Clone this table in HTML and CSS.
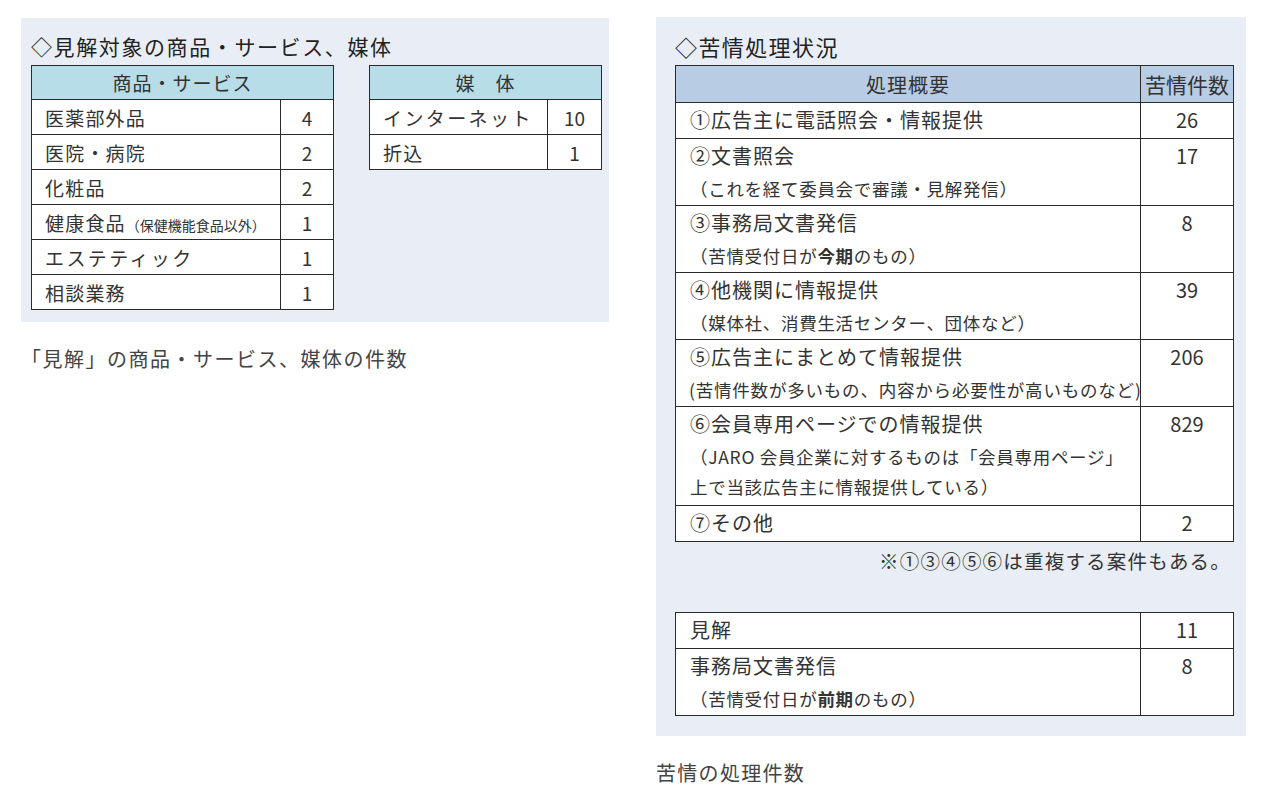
FILE: index.html
```html
<!DOCTYPE html>
<html lang="ja">
<head>
<meta charset="utf-8">
<title>見解・苦情処理</title>
<link rel="stylesheet" href="styles.css">
</head>
<body>
<div class="page">
  <figure class="fig fig-left">
    <div class="panel panel-left">
      <div class="title">◇見解対象の商品・サービス、媒体</div>
      <div class="tables">
        <table class="tbl tbl-goods">
          <colgroup><col class="c-name1"><col class="c-num1"></colgroup>
          <thead><tr><th colspan="2" class="th-teal">商品・サービス</th></tr></thead>
          <tbody>
            <tr><td>医薬部外品</td><td class="num">4</td></tr>
            <tr><td>医院・病院</td><td class="num">2</td></tr>
            <tr><td>化粧品</td><td class="num">2</td></tr>
            <tr><td>健康食品<span class="small">（保健機能食品以外）</span></td><td class="num">1</td></tr>
            <tr><td class="spaced">エステティック</td><td class="num">1</td></tr>
            <tr><td>相談業務</td><td class="num">1</td></tr>
          </tbody>
        </table>
        <table class="tbl tbl-media">
          <colgroup><col class="c-name2"><col class="c-num2"></colgroup>
          <thead><tr><th colspan="2" class="th-teal">媒　体</th></tr></thead>
          <tbody>
            <tr><td class="spaced">インターネット</td><td class="num">10</td></tr>
            <tr><td>折込</td><td class="num">1</td></tr>
          </tbody>
        </table>
      </div>
    </div>
    <figcaption class="caption">「見解」の商品・サービス、媒体の件数</figcaption>
  </figure>

  <figure class="fig fig-right">
    <div class="panel panel-right">
      <div class="title title-right">◇苦情処理状況</div>
      <table class="tbl tbl-status">
        <colgroup><col class="c-desc"><col class="c-count"></colgroup>
        <thead><tr><th class="th-blue">処理概要</th><th class="th-blue th-count">苦情件数</th></tr></thead>
        <tbody>
          <tr><td><div class="main">①広告主に電話照会・情報提供</div></td><td class="cnt">26</td></tr>
          <tr><td><div class="main">②文書照会</div><div class="sub">（これを経て委員会で審議・見解発信）</div></td><td class="cnt">17</td></tr>
          <tr><td><div class="main">③事務局文書発信</div><div class="sub">（苦情受付日が<b>今期</b>のもの）</div></td><td class="cnt">8</td></tr>
          <tr><td><div class="main">④他機関に情報提供</div><div class="sub">（媒体社、消費生活センター、団体など）</div></td><td class="cnt">39</td></tr>
          <tr><td><div class="main">⑤広告主にまとめて情報提供</div><div class="sub tight">(苦情件数が多いもの、内容から必要性が高いものなど)</div></td><td class="cnt">206</td></tr>
          <tr><td><div class="main">⑥会員専用ページでの情報提供</div><div class="sub">（JARO 会員企業に対するものは「会員専用ページ」</div><div class="sub last">上で当該広告主に情報提供している）</div></td><td class="cnt">829</td></tr>
          <tr><td><div class="main">⑦その他</div></td><td class="cnt">2</td></tr>
        </tbody>
      </table>
      <div class="note">※①③④⑤⑥は重複する案件もある。</div>
      <table class="tbl tbl-status tbl-extra">
        <colgroup><col class="c-desc"><col class="c-count"></colgroup>
        <tbody>
          <tr><td><div class="main">見解</div></td><td class="cnt">11</td></tr>
          <tr><td><div class="main">事務局文書発信</div><div class="sub">（苦情受付日が<b>前期</b>のもの）</div></td><td class="cnt">8</td></tr>
        </tbody>
      </table>
    </div>
    <figcaption class="caption">苦情の処理件数</figcaption>
  </figure>
</div>
</body>
</html>
```

FILE: styles.css
```css
* { box-sizing: border-box; }

html, body {
  margin: 0;
  padding: 0;
  background: #ffffff;
}

body {
  font-family: "Noto Sans CJK JP", "Noto Sans", sans-serif;
  color: #222;
}

.page {
  display: flex;
  align-items: flex-start;
  gap: 47px;
  padding: 17px 0 0 21px;
}

.fig {
  margin: 0;
}

.panel {
  background: #e9eef6;
}

.panel-left {
  width: 588px;
  margin-top: 1px;
  padding: 9px 10px 12px 10px;
}

.panel-right {
  width: 590px;
  padding: 10px 13px 20px 19px;
}

.title {
  font-size: 21px;
  line-height: 38px;
  letter-spacing: 1.6px;
  color: #222;
  white-space: nowrap;
}

.title-right {
  font-size: 22px;
  letter-spacing: 1.4px;
}

.tables {
  display: flex;
  align-items: flex-start;
  gap: 35px;
}

.tbl {
  border-collapse: collapse;
  background: #fff;
  table-layout: fixed;
}

.tbl th,
.tbl td {
  border: 1px solid #2a2a2a;
  padding: 0;
}

.th-teal {
  background: #b7dde8;
  font-weight: normal;
  font-size: 19px;
  letter-spacing: 1px;
  height: 34px;
  text-align: center;
  color: #333;
}

.th-blue {
  background: #b8cce4;
  font-weight: normal;
  font-size: 20px;
  letter-spacing: 1px;
  height: 37px;
  text-align: center;
  color: #333;
}

.th-count {
  letter-spacing: 0;
  font-size: 21px;
}

.tbl-goods { width: 302px; }
.c-name1 { width: 249px; }
.c-num1 { width: 53px; }

.tbl-media { width: 232px; }
.c-name2 { width: 178px; }
.c-num2 { width: 54px; }

.tbl-goods td,
.tbl-media td {
  height: 35px;
  font-size: 19px;
  letter-spacing: 1.2px;
  padding-left: 13px;
  white-space: nowrap;
  color: #333;
}

.tbl-goods td.spaced,
.tbl-media td.spaced {
  letter-spacing: 2.4px;
}

.tbl td.num {
  padding: 0;
  text-align: center;
  font-size: 19px;
  letter-spacing: 0;
}

.small {
  font-size: 14px;
  letter-spacing: 0;
}

.tbl-status { width: 558px; }
.c-desc { width: 465px; }
.c-count { width: 93px; }

.tbl-status td {
  vertical-align: top;
  padding: 0 0 1px 14px;
  color: #333;
}

.main {
  font-size: 20px;
  line-height: 34px;
  letter-spacing: 1px;
  white-space: nowrap;
}

.sub {
  font-size: 17.5px;
  line-height: 31px;
  letter-spacing: 0.7px;
  white-space: nowrap;
}

.sub.tight {
  margin-left: -1px;
  letter-spacing: 0.8px;
}

.sub.last {
  line-height: 30px;
  padding-bottom: 2px;
}

.tbl-status td.cnt {
  padding: 0;
  text-align: center;
  font-size: 20px;
  line-height: 34px;
}

.note {
  text-align: right;
  font-size: 19.5px;
  letter-spacing: 1.2px;
  line-height: 38px;
  padding-right: 2px;
  color: #333;
  white-space: nowrap;
}

.tbl-extra {
  margin-top: 32px;
}

.caption {
  margin-top: 24px;
  font-size: 20px;
  letter-spacing: 1.5px;
  line-height: 26px;
  color: #444;
  white-space: nowrap;
}

.fig-right .caption {
  margin-top: 24px;
  letter-spacing: 1.3px;
}
```
